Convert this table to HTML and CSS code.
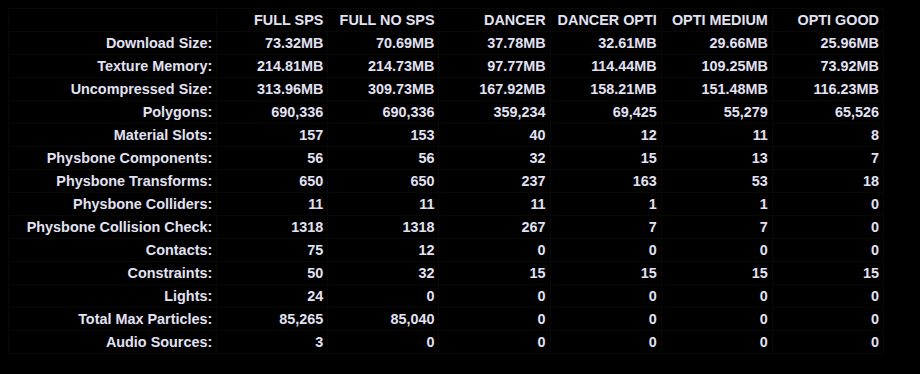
FILE: index.html
```html
<!DOCTYPE html>
<html>
<head>
<meta charset="utf-8">
<link rel="stylesheet" href="styles.css">
</head>
<body>
<table class="stats">
  <colgroup>
    <col class="c-label"><col class="c-data"><col class="c-data"><col class="c-data"><col class="c-data"><col class="c-data"><col class="c-data">
  </colgroup>
  <thead>
    <tr><th></th><th>FULL SPS</th><th>FULL NO SPS</th><th>DANCER</th><th>DANCER OPTI</th><th>OPTI MEDIUM</th><th>OPTI GOOD</th></tr>
  </thead>
  <tbody>
    <tr><th>Download Size:</th><td>73.32MB</td><td>70.69MB</td><td>37.78MB</td><td>32.61MB</td><td>29.66MB</td><td>25.96MB</td></tr>
    <tr><th>Texture Memory:</th><td>214.81MB</td><td>214.73MB</td><td>97.77MB</td><td>114.44MB</td><td>109.25MB</td><td>73.92MB</td></tr>
    <tr><th>Uncompressed Size:</th><td>313.96MB</td><td>309.73MB</td><td>167.92MB</td><td>158.21MB</td><td>151.48MB</td><td>116.23MB</td></tr>
    <tr><th>Polygons:</th><td>690,336</td><td>690,336</td><td>359,234</td><td>69,425</td><td>55,279</td><td>65,526</td></tr>
    <tr><th>Material Slots:</th><td>157</td><td>153</td><td>40</td><td>12</td><td>11</td><td>8</td></tr>
    <tr><th>Physbone Components:</th><td>56</td><td>56</td><td>32</td><td>15</td><td>13</td><td>7</td></tr>
    <tr><th>Physbone Transforms:</th><td>650</td><td>650</td><td>237</td><td>163</td><td>53</td><td>18</td></tr>
    <tr><th>Physbone Colliders:</th><td>11</td><td>11</td><td>11</td><td>1</td><td>1</td><td>0</td></tr>
    <tr><th>Physbone Collision Check:</th><td>1318</td><td>1318</td><td>267</td><td>7</td><td>7</td><td>0</td></tr>
    <tr><th>Contacts:</th><td>75</td><td>12</td><td>0</td><td>0</td><td>0</td><td>0</td></tr>
    <tr><th>Constraints:</th><td>50</td><td>32</td><td>15</td><td>15</td><td>15</td><td>15</td></tr>
    <tr><th>Lights:</th><td>24</td><td>0</td><td>0</td><td>0</td><td>0</td><td>0</td></tr>
    <tr><th>Total Max Particles:</th><td>85,265</td><td>85,040</td><td>0</td><td>0</td><td>0</td><td>0</td></tr>
    <tr><th>Audio Sources:</th><td>3</td><td>0</td><td>0</td><td>0</td><td>0</td><td>0</td></tr>
  </tbody>
</table>
</body>
</html>
```
FILE: styles.css
```css
html, body {
  margin: 0;
  background: #000;
}
body {
  padding: 8px 0 0 8px;
  font-family: "Liberation Sans", Arial, sans-serif;
  font-size: 14.4px;
  font-weight: bold;
  color: #e2e2f4;
}
.stats {
  border-collapse: collapse;
  table-layout: fixed;
  width: 876px;
}
.c-label { width: 208px; }
.c-data { width: 111px; }
.stats th, .stats td {
  border: 1px solid #080808;
  height: 22px;
  padding: 0 4px;
  text-align: right;
  font-weight: bold;
  white-space: nowrap;
  line-height: 16px;
  vertical-align: middle;
}
```
